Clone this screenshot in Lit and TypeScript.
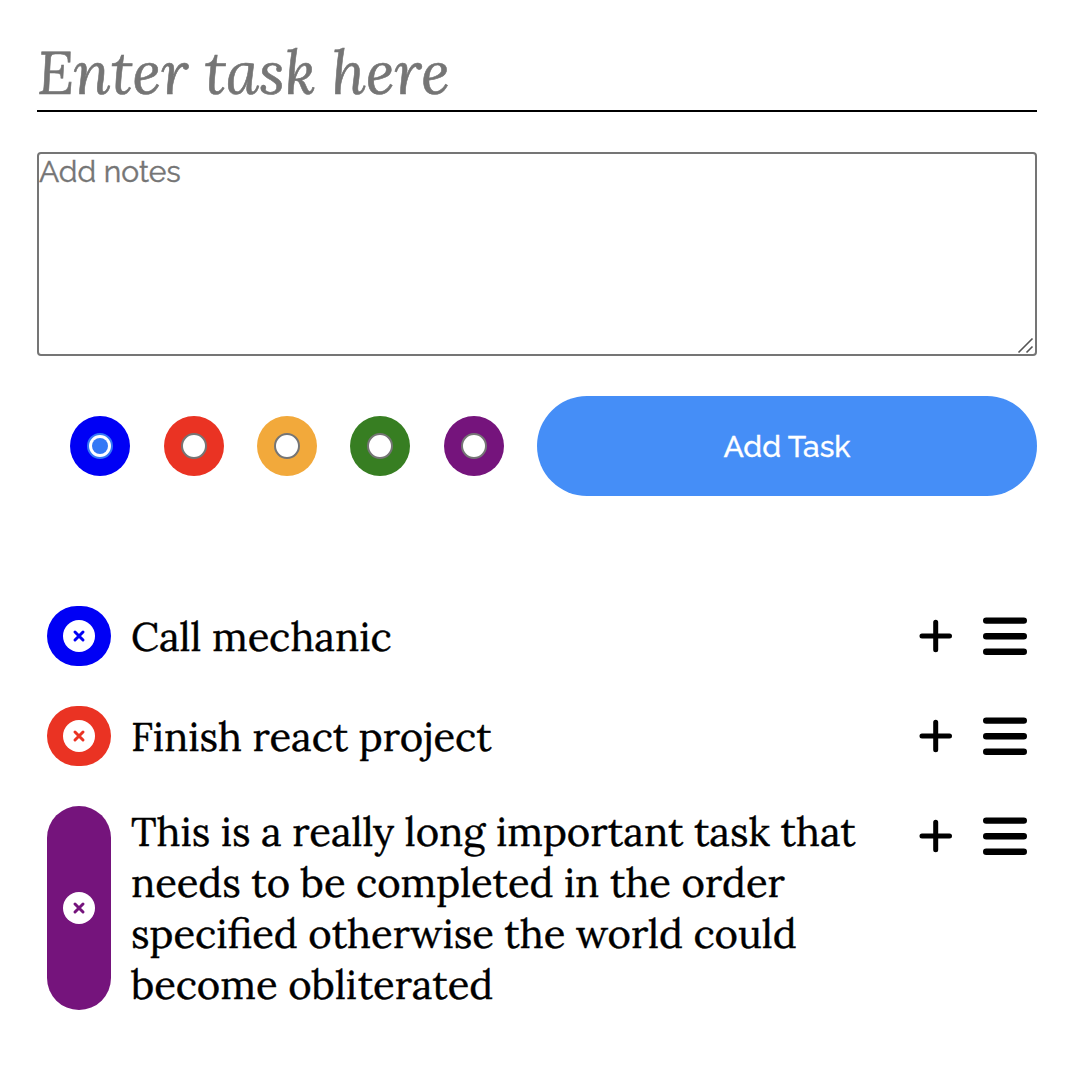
import { LitElement, html, css } from "lit";
import { customElement, state } from "lit/decorators.js";
import { classMap } from "lit/directives/class-map.js";
import { styleMap } from "lit/directives/style-map.js";

interface Task {
  color: string;
  name: string;
}

const COLORS = ["#0000f5", "#ea3323", "#f2a93b", "#377e22", "#75147c"];

const TASKS: Task[] = [
  { color: "#0000f5", name: "Call mechanic" },
  { color: "#ea3323", name: "Finish react project" },
  {
    color: "#75147c",
    name: "This is a really long important task that needs to be completed in the order specified otherwise the world could become obliterated",
  },
];

@customElement("app-root")
export class AppRoot extends LitElement {
  @state() private selected = 0;

  static styles = css`
    :host {
      display: block;
      box-sizing: border-box;
      width: 1084px;
      height: 1088px;
      padding: 32px 47px 0 37px;
      background: #fff;
      color: #000;
      overflow: hidden;
    }
    .title {
      height: 78px;
      border-bottom: 2px solid #000;
      color: #757575;
      font: italic 60px/81px "Lora", "Liberation Serif", serif;
      white-space: nowrap;
      -webkit-text-stroke: 0.6px #757575;
    }
    .notes {
      display: flex;
      justify-content: space-between;
      box-sizing: border-box;
      height: 204px;
      margin-top: 40px;
      border: 2px solid #757575;
      border-radius: 4px;
      color: #757575;
      font: 30px/35px "Raleway", "Lato", sans-serif;
      -webkit-text-stroke: 0.4px #757575;
    }
    .grip {
      align-self: flex-end;
      width: 20px;
      height: 20px;
    }
    .controls {
      display: flex;
      height: 100px;
      margin-top: 40px;
    }
    .colors {
      display: flex;
      flex: 1;
      align-items: center;
      justify-content: space-evenly;
    }
    .swatch {
      display: grid;
      place-items: center;
      width: 60px;
      height: 60px;
      border-radius: 50%;
    }
    .radio {
      display: grid;
      place-items: center;
      box-sizing: border-box;
      width: 26px;
      height: 26px;
      border: 2px solid #757575;
      border-radius: 50%;
      background: #fff;
    }
    .radio.on {
      border-color: #3478f6;
    }
    .radio.on::after {
      content: "";
      width: 16px;
      height: 16px;
      border-radius: 50%;
      background: #3478f6;
    }
    .add {
      width: 500px;
      height: 100px;
      padding: 2px 0 0;
      border: 0;
      border-radius: 50px;
      background: #458ef7;
      color: #fff;
      font: 500 30px/98px "Raleway", "Lato", sans-serif;
      -webkit-text-stroke: 0.3px #fff;
    }
    .list {
      display: flex;
      flex-direction: column;
      gap: 40px;
      padding: 0 10px;
      margin-top: 110px;
    }
    .task {
      display: flex;
    }
    .bullet {
      display: grid;
      place-items: center;
      width: 64px;
      min-height: 60px;
      border-radius: 32px;
    }
    .bullet svg {
      display: block;
    }
    .name {
      flex: 1;
      align-self: center;
      margin-left: 20px;
      font: 40px/51px "Lora", "Liberation Serif", serif;
      -webkit-text-stroke: 0.4px #000;
    }
    .icons {
      display: flex;
      align-items: center;
      gap: 26px;
      height: 60px;
    }
    .icons svg {
      display: block;
    }
  `;

  private renderTask(task: Task) {
    return html`<div class="task">
      <div class="bullet" style=${styleMap({ background: task.color })}>
        <svg width="32" height="32" viewBox="0 0 32 32">
          <circle cx="16" cy="16" r="16" fill="#fff" />
          <path d="M12 12l8 8M20 12l-8 8" stroke=${task.color} stroke-width="3" stroke-linecap="round" />
        </svg>
      </div>
      <div class="name">${task.name}</div>
      <div class="icons">
        <svg width="42" height="42" viewBox="0 0 42 42">
          <path d="M7 21h27.5M20.7 7.3v27.4" stroke="#000" stroke-width="5" stroke-linecap="round" />
        </svg>
        <svg width="44" height="44" viewBox="0 0 44 44">
          <path d="M3.2 6.6h37.6M3.2 22.2h37.6M3.2 37.8h37.6" stroke="#000" stroke-width="6.4" stroke-linecap="round" />
        </svg>
      </div>
    </div>`;
  }

  render() {
    return html`
      <div class="title">Enter task here</div>
      <div class="notes">
        <span>Add notes</span>
        <svg class="grip" viewBox="0 0 20 20">
          <path d="M3.5 18.5L17.5 4.5M11.5 18.5l6-6" stroke="#555" stroke-width="1.6" />
        </svg>
      </div>
      <div class="controls">
        <div class="colors">
          ${COLORS.map(
            (c, i) => html`<div class="swatch" style=${styleMap({ background: c })} @click=${() => (this.selected = i)}>
              <span class=${classMap({ radio: true, on: i === this.selected })}></span>
            </div>`
          )}
        </div>
        <button class="add">Add Task</button>
      </div>
      <div class="list">${TASKS.map((t) => this.renderTask(t))}</div>
    `;
  }
}
